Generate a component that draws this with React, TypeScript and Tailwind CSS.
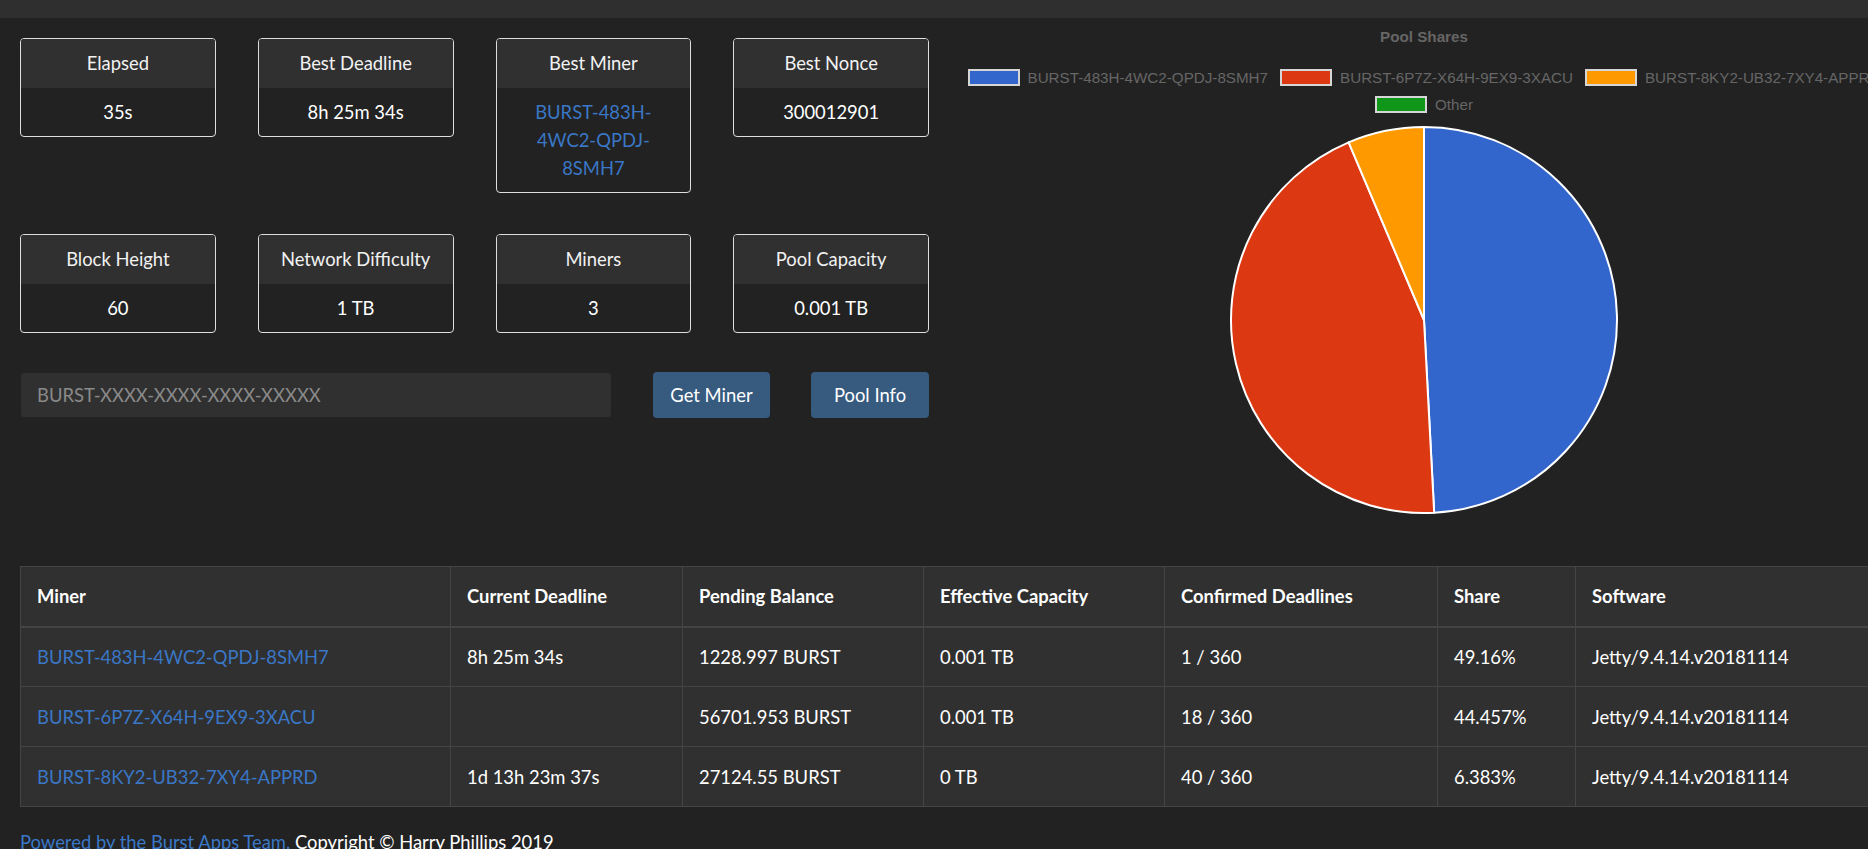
import React from "react";

const stats1 = [
  { label: "Elapsed", value: "35s" },
  { label: "Best Deadline", value: "8h 25m 34s" },
  { label: "Best Miner", value: "BURST-483H-4WC2-QPDJ-8SMH7", link: true },
  { label: "Best Nonce", value: "300012901" },
];

const stats2 = [
  { label: "Block Height", value: "60" },
  { label: "Network Difficulty", value: "1 TB" },
  { label: "Miners", value: "3" },
  { label: "Pool Capacity", value: "0.001 TB" },
];

const shares = [
  { name: "BURST-483H-4WC2-QPDJ-8SMH7", pct: 49.16, color: "#3366cc" },
  { name: "BURST-6P7Z-X64H-9EX9-3XACU", pct: 44.457, color: "#dc3912" },
  { name: "BURST-8KY2-UB32-7XY4-APPRD", pct: 6.383, color: "#ff9900" },
  { name: "Other", pct: 0, color: "#109618" },
];

const miners = [
  {
    id: "BURST-483H-4WC2-QPDJ-8SMH7",
    deadline: "8h 25m 34s",
    pending: "1228.997 BURST",
    capacity: "0.001 TB",
    confirmed: "1 / 360",
    share: "49.16%",
    software: "Jetty/9.4.14.v20181114",
  },
  {
    id: "BURST-6P7Z-X64H-9EX9-3XACU",
    deadline: "",
    pending: "56701.953 BURST",
    capacity: "0.001 TB",
    confirmed: "18 / 360",
    share: "44.457%",
    software: "Jetty/9.4.14.v20181114",
  },
  {
    id: "BURST-8KY2-UB32-7XY4-APPRD",
    deadline: "1d 13h 23m 37s",
    pending: "27124.55 BURST",
    capacity: "0 TB",
    confirmed: "40 / 360",
    share: "6.383%",
    software: "Jetty/9.4.14.v20181114",
  },
];

const StatCard = ({ label, value, link }: { label: string; value: string; link?: boolean }) => (
  <div className="w-[196px] border border-[#dedede] rounded-[4px] overflow-hidden">
    <div className="h-[49px] pb-[2px] bg-[#303030] flex items-center justify-center text-[#f2f2f2]">{label}</div>
    <div className="px-5 py-[10px] text-center">
      {link ? <a className="text-[#3a77c6]">{value}</a> : <span className="text-white">{value}</span>}
    </div>
  </div>
);

// pie slices, clockwise from 12 o'clock
const PieChart = () => {
  const cx = 200;
  const cy = 200;
  const r = 193;
  let start = -Math.PI / 2;
  const slices = shares
    .filter((s) => s.pct > 0)
    .map((s) => {
      const end = start + (s.pct / 100) * Math.PI * 2;
      const x1 = cx + r * Math.cos(start);
      const y1 = cy + r * Math.sin(start);
      const x2 = cx + r * Math.cos(end);
      const y2 = cy + r * Math.sin(end);
      const large = end - start > Math.PI ? 1 : 0;
      const d = `M${cx},${cy} L${x1},${y1} A${r},${r} 0 ${large} 1 ${x2},${y2} Z`;
      start = end;
      return { d, color: s.color };
    });
  return (
    <svg width="400" height="400" viewBox="0 0 400 400">
      {slices.map((s, i) => (
        <path key={i} d={s.d} fill={s.color} stroke="#ffffff" strokeWidth="2" strokeLinejoin="round" />
      ))}
    </svg>
  );
};

const App = () => {
  const cols = ["w-[430px]", "w-[232px]", "w-[241px]", "w-[241px]", "w-[273px]", "w-[138px]", ""];
  return (
    <div className="w-full min-h-[849px] bg-[#222222] overflow-hidden font-['Lato','Noto_Sans',sans-serif] text-[18.4px] leading-[28px] text-white">
      <div className="h-[18px] bg-[#2f2f2f]" />
      <div className="w-[1908px] px-5">
        <div className="flex">
          {/* LEFT: stats + search */}
          <div className="w-[909px] pt-5">
            <div className="flex gap-[42px] items-start">
              {stats1.map((s) => (
                <StatCard key={s.label} {...s} />
              ))}
            </div>
            <div className="flex gap-[42px] items-start mt-[41px]">
              {stats2.map((s) => (
                <StatCard key={s.label} {...s} />
              ))}
            </div>
            <div className="flex items-center mt-[39px]">
              <input
                className="ml-px w-[590px] h-[44px] bg-[#303030] rounded-[3px] px-4 text-white placeholder:text-[#8a8a8a] outline-none"
                placeholder="BURST-XXXX-XXXX-XXXX-XXXXX"
              />
              <button className="ml-[42px] w-[117px] h-[46px] bg-[#375a7f] rounded-[4px] text-white">Get Miner</button>
              <button className="ml-[41px] w-[118px] h-[46px] bg-[#375a7f] rounded-[4px] text-white">Pool Info</button>
            </div>
          </div>

          {/* RIGHT: pool shares chart */}
          <div className="ml-[31px] w-[928px] flex flex-col items-center font-['Liberation_Sans',Arial,sans-serif] text-[15.2px] leading-[17px] text-[#666666]">
            <div className="mt-[10px] font-bold">Pool Shares</div>
            <div className="mt-[24px] flex flex-wrap justify-center gap-x-[12px] gap-y-[10px] w-[928px]">
              {shares.map((s) => (
                <div key={s.name} className="flex items-center gap-[8px] whitespace-nowrap">
                  <span className="w-[52px] h-[17px] border-2 border-[#d6d6d6]" style={{ background: s.color }} />
                  <span>{s.name}</span>
                </div>
              ))}
            </div>
            <div className="mt-[7px]">
              <PieChart />
            </div>
          </div>
        </div>

        {/* MINERS TABLE */}
        <table className="mt-[46px] w-full border-collapse bg-[#303030]">
          <thead>
            <tr className="h-[60px] border-b-2 border-[#444444]">
              {["Miner", "Current Deadline", "Pending Balance", "Effective Capacity", "Confirmed Deadlines", "Share", "Software"].map(
                (h, i) => (
                  <th key={h} className={`${cols[i]} border border-[#444444] px-4 text-left font-bold`}>
                    {h}
                  </th>
                )
              )}
            </tr>
          </thead>
          <tbody>
            {miners.map((m) => (
              <tr key={m.id} className="h-[60px]">
                <td className="border border-[#444444] px-4 text-[#3a77c6]">{m.id}</td>
                <td className="border border-[#444444] px-4">{m.deadline}</td>
                <td className="border border-[#444444] px-4">{m.pending}</td>
                <td className="border border-[#444444] px-4">{m.capacity}</td>
                <td className="border border-[#444444] px-4">{m.confirmed}</td>
                <td className="border border-[#444444] px-4">{m.share}</td>
                <td className="border border-[#444444] px-4">{m.software}</td>
              </tr>
            ))}
          </tbody>
        </table>

        <p className="mt-[21px] pb-4">
          <a className="text-[#3a77c6]">Powered by the Burst Apps Team.</a> Copyright © Harry Phillips 2019
        </p>
      </div>
    </div>
  );
};

export default App;
